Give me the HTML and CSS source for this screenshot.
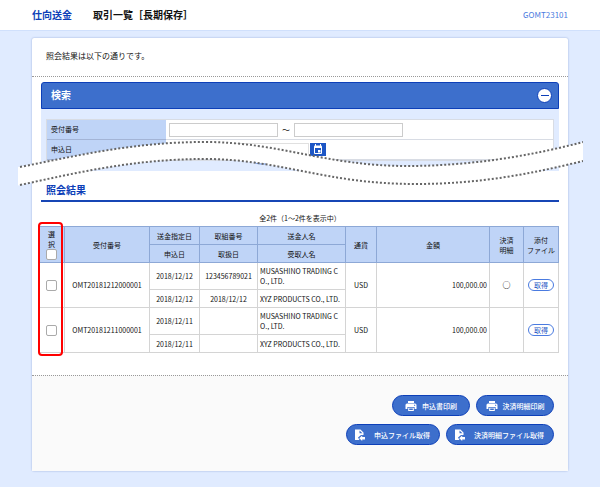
FILE: index.html
```html
<!DOCTYPE html>
<html lang="ja">
<head>
<meta charset="utf-8">
<meta name="viewport" content="width=device-width, initial-scale=1">
<title>取引一覧［長期保存］</title>
<link rel="stylesheet" href="styles.css">
</head>
<body>
<svg class="symbols" aria-hidden="true">
  <symbol id="printer" viewBox="0 0 12 12">
    <path fill="currentColor" d="M3 1h6v2H3zM2 3.6h8a1.5 1.5 0 0 1 1.5 1.5V9H9.6V7H2.4v2H.5V5.100A1.500 1.500 0 0 1 2 3.600zM3.200 7.800h5.600V11H3.200z"/>
    <path fill="#3d6fcc" d="M4.200 8.600h3.600v1.400H4.200zM9 4.700h1.200v1H9z"/>
  </symbol>
  <symbol id="file" viewBox="0 0 12 12">
    <path fill="currentColor" d="M1 .5h5.500L9.500 3.500V6H7L4 8.500 5.500 11H1z"/>
    <path fill="#3d6fcc" d="M5.500 1.500V4.200H8.500z"/>
    <path fill="currentColor" d="M5.200 9.200l3-2.700V8H11v2.400H8.200V12z"/>
  </symbol>
</svg>
<header class="topbar">
  <span class="category">仕向送金</span>
  <h1 class="title">取引一覧［長期保存］</h1>
  <span class="screen-id">GOMT23101</span>
</header>
<main class="card">
  <p class="intro">照会結果は以下の通りです。</p>
  <section class="search">
    <div class="search-head">
      <h2>検索</h2>
      <button class="collapse" type="button" aria-label="閉じる"></button>
    </div>
    <div class="search-body">
      <div class="fields">
        <label class="field-name" for="no-from">受付番号</label>
        <div class="field">
          <input id="no-from" type="text">
          <span class="tilde">～</span>
          <input type="text" aria-label="受付番号（終了）">
        </div>
        <label class="field-name" for="date-from">申込日</label>
        <div class="field dates">
          <input id="date-from" type="text">
          <input type="text" aria-label="申込日（終了）">
          <button class="calendar" type="button" aria-label="カレンダー">
            <svg viewBox="0 0 16 13"><rect x="4" y="2.500" width="8" height="8.500" rx="1" fill="#fff"/><path d="M5.500 1v2M10.500 1v2" stroke="#fff"/><path fill="#1d56c5" d="M5 5h6v5H5z"/><path fill="#fff" d="M8 7h2.500v2.500H8z"/></svg>
          </button>
        </div>
      </div>
    </div>
    <svg class="tear" viewBox="18 138 565 50" preserveAspectRatio="none" aria-hidden="true">
      <path class="tear-fill" d="M18 167C80 155 135 142 205 142C280 142 325 166 407 166C470 166 530 156 583 142V161C530 174 480 184 415 184C325 184 280 159 205 159C135 159 80 172 18 185.500Z"/>
      <path class="tear-peek" d="M254 162Q256 164 261 164H266"/>
      <path class="tear-edge" d="M20 167C80 155 135 142 205 142C280 142 325 166 407 166C470 166 530 156 583 142"/>
      <path class="tear-edge" d="M20 185C80 172 135 159 205 159C280 159 325 184 415 184C480 184 530 174 583 161"/>
    </svg>
  </section>
  <section class="results">
    <h2 class="results-title">照会結果</h2>
    <p class="count">全2件（1～2件を表示中）</p>
    <div class="table-wrap">
      <table>
        <colgroup>
          <col class="c-select"><col class="c-no"><col class="c-date"><col class="c-ref"><col class="c-name"><col class="c-cur"><col><col class="c-detail"><col class="c-file">
        </colgroup>
        <thead>
          <tr>
            <th rowspan="2"><label for="all">選<br>択</label><input id="all" type="checkbox"></th>
            <th rowspan="2">受付番号</th>
            <th>送金指定日</th>
            <th>取組番号</th>
            <th>送金人名</th>
            <th rowspan="2">通貨</th>
            <th rowspan="2">金額</th>
            <th rowspan="2">決済<br>明細</th>
            <th rowspan="2">添付<br>ファイル</th>
          </tr>
          <tr><th>申込日</th><th>取扱日</th><th>受取人名</th></tr>
        </thead>
        <tbody>
          <tr class="tall">
            <td rowspan="2"><input type="checkbox" aria-label="OMT20181212000001を選択"></td>
            <td rowspan="2">OMT20181212000001</td>
            <td>2018/12/12</td>
            <td>123456789021</td>
            <td class="name">MUSASHINO TRADING C<br>O., LTD.</td>
            <td rowspan="2">USD</td>
            <td rowspan="2" class="amount">100,000.00</td>
            <td rowspan="2" class="mark">○</td>
            <td rowspan="2"><button class="get" type="button">取得</button></td>
          </tr>
          <tr><td>2018/12/12</td><td>2018/12/12</td><td class="name">XYZ PRODUCTS CO., LTD.</td></tr>
          <tr class="tall">
            <td rowspan="2"><input type="checkbox" aria-label="OMT20181211000001を選択"></td>
            <td rowspan="2">OMT20181211000001</td>
            <td>2018/12/11</td>
            <td></td>
            <td class="name">MUSASHINO TRADING C<br>O., LTD.</td>
            <td rowspan="2">USD</td>
            <td rowspan="2" class="amount">100,000.00</td>
            <td rowspan="2"></td>
            <td rowspan="2"><button class="get" type="button">取得</button></td>
          </tr>
          <tr><td>2018/12/11</td><td></td><td class="name">XYZ PRODUCTS CO., LTD.</td></tr>
        </tbody>
      </table>
      <div class="highlight"></div>
    </div>
  </section>
  <footer class="actions">
    <div class="action-row">
      <button class="action" type="button"><svg><use href="#printer"/></svg><span>申込書印刷</span></button>
      <button class="action" type="button"><svg><use href="#printer"/></svg><span>決済明細印刷</span></button>
    </div>
    <div class="action-row">
      <button class="action wide" type="button"><svg><use href="#file"/></svg><span>申込ファイル取得</span></button>
      <button class="action wide" type="button"><svg><use href="#file"/></svg><span>決済明細ファイル取得</span></button>
    </div>
  </footer>
</main>
</body>
</html>
```
FILE: styles.css
```css
* { box-sizing: border-box; }
body {
  margin: 0;
  background: #e0ebff;
  color: #111;
  font: 7px/10px "Noto Sans CJK JP", sans-serif;
}
h1, h2, p { margin: 0; }
button, input { font: inherit; margin: 0; padding: 0; }
.symbols { display: none; }

.topbar {
  display: flex;
  align-items: center;
  height: 31px;
  padding: 0 32px;
  background: #fff;
  border-bottom: 1px solid #d0e0fc;
}
.category, .title { font-size: 10px; font-weight: 700; }
.category { color: #0d3fb8; margin-right: 21px; }
.screen-id { margin-left: auto; font-size: 8px; color: #4a7be0; }

.card {
  margin: 7px 32px 16px;
  background: #fff;
  border-radius: 2px;
  box-shadow: 0 0 2px #8fa4d4;
}
.intro {
  padding: 13px 14px 15px;
  font-size: 8px;
  border-bottom: 1px dotted #999;
}

.search { position: relative; margin: 5px 9px 0; }
.search-head {
  display: flex;
  align-items: center;
  justify-content: space-between;
  height: 27px;
  padding: 0 6px 0 9px;
  color: #fff;
  background: #3d6fcc;
  border: 1px solid #0d3fb8;
  border-radius: 3px 3px 0 0;
}
.search-head h2 { font-size: 10px; padding-bottom: 2px; }
.collapse {
  display: grid;
  place-items: center;
  width: 15px;
  height: 15px;
  background: #fff;
  border: 1px solid #0d3fb8;
  border-radius: 50%;
}
.collapse::before { content: ""; width: 8px; height: 1px; background: #0d3fb8; }
.search-body { padding: 10px 5px; background: #e0ebff; }
.fields {
  display: grid;
  grid-template-columns: 119px 1fr;
  grid-auto-rows: 20px;
  background: #fff;
  border: 1px solid #d8dce4;
}
.field-name {
  padding: 4px 4px;
  background: #bfd4f7;
  border-bottom: 1px solid #a3b4d6;
}
.field {
  display: flex;
  align-items: center;
  padding-left: 3px;
  border-bottom: 1px solid #d8dce4;
}
.field input {
  width: 109px;
  height: 14px;
  border: 1px solid #ccc;
  background: #fff;
}
.tilde { width: 16px; text-align: center; font-size: 8px; }
.field.dates input { width: 69px; border-color: #e0e0e0; }
.field.dates input + input { margin-left: 2px; }
.calendar {
  width: 16px;
  height: 13px;
  margin-left: 1px;
  border: 0;
  background: #1d56c5;
}
.calendar svg { display: block; }
.tear {
  position: absolute;
  left: -23px;
  top: 56px;
  width: calc(100% + 47px);
  height: 50px;
}
.tear-fill { fill: #fff; }
.tear-peek { fill: none; stroke: #6f98e6; }
.tear-edge { fill: none; stroke: #666; stroke-width: 2; stroke-dasharray: 2 2; }

.results { padding: 14px 9px 22px; }
.results-title {
  padding: 0 5px 5px;
  font-size: 10px;
  color: #0d3fb8;
  border-bottom: 2px solid #1746b5;
}
.count { margin: 11px 0 3px; text-align: center; }
.table-wrap { position: relative; margin-left: -3px; }
table { width: 100%; table-layout: fixed; border-collapse: collapse; }
th, td {
  height: 18px;
  padding: 0;
  text-align: center;
  font-weight: 400;
  border: 1px solid #d4d4d4;
}
th { background: #bfd4f7; border-color: #8da8d6; }
.tall td { height: 27px; }
.c-select { width: 26px; }
.c-no { width: 85px; }
.c-date { width: 50px; }
.c-ref { width: 58px; }
.c-name { width: 88px; }
.c-cur { width: 31px; }
.c-detail { width: 34px; }
.c-file { width: 35px; }
td.name { padding-left: 2px; text-align: left; white-space: nowrap; }
td.amount { padding-right: 2px; text-align: right; }
td.mark { font-size: 8px; font-weight: 700; }
input[type="checkbox"] {
  appearance: none;
  display: block;
  width: 11px;
  height: 11px;
  margin: 0 auto;
  background: #fff;
  border: 1px solid #aaa;
  border-radius: 2px;
}
.get {
  width: 26px;
  height: 12px;
  line-height: 10px;
  color: #1d56c5;
  background: #fff;
  border: 1px solid #4a7be0;
  border-radius: 6px;
}
.highlight {
  position: absolute;
  left: 0;
  top: -4px;
  bottom: -3px;
  width: 25px;
  border: 2px solid #f00;
  border-radius: 4px;
}

.actions {
  padding: 19px 14px 26px;
  background: #fafafa;
  border-top: 1px dotted #999;
}
.action-row { display: flex; justify-content: flex-end; gap: 6px; }
.action-row + .action-row { margin-top: 8px; }
.action {
  display: flex;
  align-items: center;
  justify-content: center;
  gap: 5px;
  min-width: 78px;
  height: 21px;
  color: #fff;
  font-weight: 500;
  background: #3d6fcc;
  border: 1px solid #0d3fb8;
  border-radius: 11px;
}
.action svg { width: 12px; height: 12px; }
.action.wide { padding: 0 9px 0 7px; gap: 8px; }
```
